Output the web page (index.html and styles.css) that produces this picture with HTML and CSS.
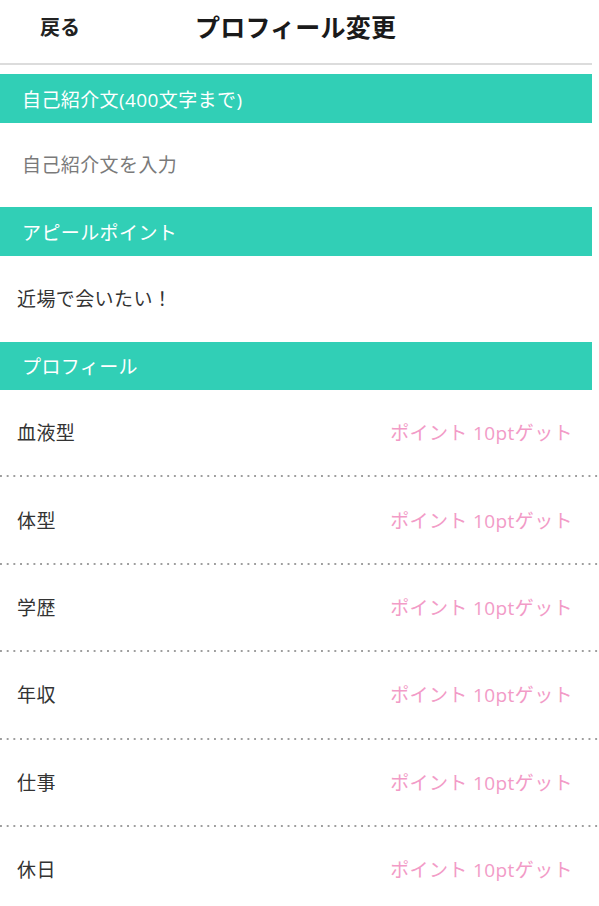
FILE: index.html
```html
<!DOCTYPE html>
<html lang="ja">
<head>
<meta charset="utf-8">
<title>プロフィール変更</title>
<link rel="stylesheet" href="styles.css">
</head>
<body>
<header class="topbar">
  <span class="back">戻る</span>
  <h1 class="title">プロフィール変更</h1>
</header>
<div class="divider"></div>

<main class="content">
  <div class="section-head">自己紹介文(400文字まで)</div>
  <div class="field placeholder">自己紹介文を入力</div>

  <div class="section-head head-2">アピールポイント</div>
  <div class="field appeal">近場で会いたい！</div>

  <div class="section-head head-3">プロフィール</div>
  <ul class="rows">
    <li class="row"><span class="label">血液型</span><span class="bonus">ポイント 10ptゲット</span></li>
    <li class="row"><span class="label">体型</span><span class="bonus">ポイント 10ptゲット</span></li>
    <li class="row"><span class="label">学歴</span><span class="bonus">ポイント 10ptゲット</span></li>
    <li class="row"><span class="label">年収</span><span class="bonus">ポイント 10ptゲット</span></li>
    <li class="row"><span class="label">仕事</span><span class="bonus">ポイント 10ptゲット</span></li>
    <li class="row"><span class="label">休日</span><span class="bonus">ポイント 10ptゲット</span></li>
  </ul>
</main>
</body>
</html>
```

FILE: styles.css
```css
html, body {
  margin: 0;
  padding: 0;
  background: #ffffff;
}

body {
  width: 599px;
  overflow: hidden;
  font-family: "Open Sans", "Noto Sans CJK JP", sans-serif;
  color: #333333;
}

.topbar {
  height: 63px;
  display: flex;
  align-items: center;
  padding-left: 40px;
  padding-bottom: 8px;
  box-sizing: border-box;
}

.back {
  font-size: 20px;
  font-weight: 700;
  color: #222222;
  line-height: 1;
}

.title {
  margin: 0 0 0 115px;
  font-size: 25px;
  font-weight: 700;
  color: #1a1a1a;
  line-height: 1;
  letter-spacing: 0.2px;
}

.divider {
  width: 592px;
  height: 2px;
  background: #dcdcdc;
}

.content {
  margin-top: 9px;
}

.section-head {
  width: 592px;
  height: 49px;
  box-sizing: border-box;
  background: #31cfb6;
  color: #ffffff;
  font-size: 19px;
  line-height: 1;
  letter-spacing: 0.4px;
  padding-left: 22px;
  display: flex;
  align-items: center;
  padding-top: 3px;
}

.head-3 {
  height: 48px;
}

.field {
  height: 84px;
  display: flex;
  align-items: center;
  font-size: 19px;
  line-height: 1;
  letter-spacing: 0.4px;
}

.placeholder {
  padding-left: 22px;
  color: #7a7a7a;
}

.appeal {
  height: 86px;
  padding-left: 17px;
  color: #333333;
}

.rows {
  list-style: none;
  margin: 0;
  padding: 0;
}

.row {
  height: 87.4px;
  box-sizing: border-box;
  display: flex;
  align-items: center;
  justify-content: space-between;
  padding: 0 26px 0 17px;
  font-size: 19px;
  line-height: 1;
  letter-spacing: 0.4px;
  background: linear-gradient(to right, #9e9e9e 35%, transparent 35%) left bottom / 6.7px 2px repeat-x;
}

.label {
  color: #333333;
}

.bonus {
  color: #f29bc7;
}
```
